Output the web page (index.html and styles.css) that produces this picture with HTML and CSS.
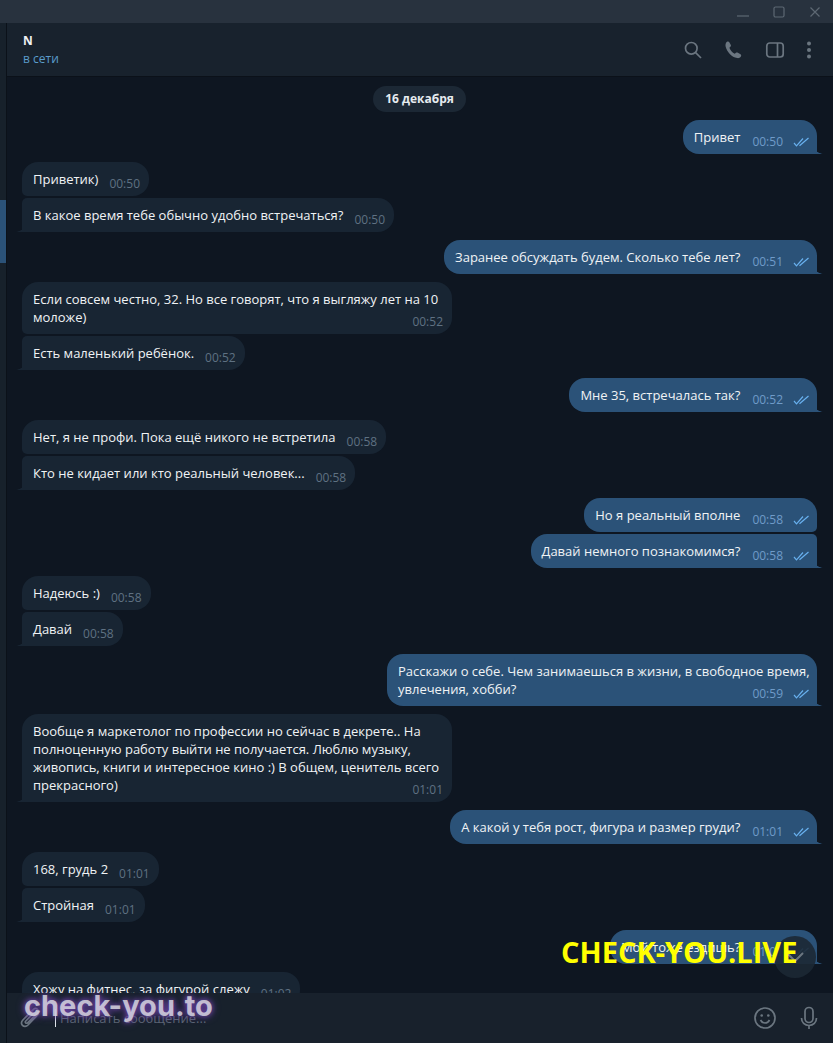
FILE: index.html
```html
<!DOCTYPE html>
<html lang="ru">
<head>
    <meta charset="UTF-8">
    <title>N</title>
    <link rel="stylesheet" href="styles.css">
</head>
<body>
    <div class="window">
        <div class="titlebar">
            <svg class="win-btn" width="14" height="14" viewBox="0 0 14 14"><path d="M1 11h12"/></svg>
            <svg class="win-btn" width="14" height="14" viewBox="0 0 14 14"><rect x="2" y="2" width="10" height="10" rx="1.5"/></svg>
            <svg class="win-btn" width="14" height="14" viewBox="0 0 14 14"><path d="M2.5 2.5l9 9M11.5 2.5l-9 9"/></svg>
        </div>
        <div class="main">
            <div class="side">
                <div class="side-mark"></div>
            </div>
            <div class="chat">
                <div class="header">
                    <div class="peer">
                        <div class="peer-name">N</div>
                        <div class="peer-status">в сети</div>
                    </div>
                    <div class="header-icons">
                        <svg class="icon" width="20" height="20" viewBox="0 0 20 20"><circle cx="8.3" cy="8.3" r="5.8"/><path d="M12.6 12.6l5.4 5.4"/></svg>
                        <svg class="icon icon-fill" width="20" height="20" viewBox="0 0 20 20"><path d="M3 1.8c.9-.5 1.8-.4 2.3.4l1.4 2.6c.4.8.3 1.5-.3 2l-1 .9c.8 2.4 2.9 4.8 5.4 6l1.1-.9c.6-.5 1.3-.5 2-.1l2.6 1.6c.8.5.9 1.4.4 2.2-.9 1.3-2.3 2-3.8 1.6C7.600 16.900 3 12 1.600 6.400 1.200 4.700 1.800 2.700 3 1.800z"/></svg>
                        <svg class="icon" width="20" height="20" viewBox="0 0 20 20"><rect x="1.800" y="3" width="16.400" height="14" rx="3"/><path d="M12.500 3v14"/></svg>
                        <svg class="icon icon-fill" width="6" height="20" viewBox="0 0 6 20"><circle cx="3" cy="3.500" r="2"/><circle cx="3" cy="10" r="2"/><circle cx="3" cy="16.500" r="2"/></svg>
                    </div>
                </div>

                <div class="messages">
                    <div class="date">16 декабря</div>

                    <div class="group out">
                        <div class="bubble last">Привет<span class="meta">00:50<svg class="ticks" width="17" height="10" viewBox="0 0 17 10"><path d="M1 6l2.500 2.800L10 1.500M6.500 8.800L15.500 1"/></svg></span></div>
                    </div>

                    <div class="group in">
                        <div class="bubble first">Приветик)<span class="meta">00:50</span></div>
                        <div class="bubble last">В какое время тебе обычно удобно встречаться?<span class="meta">00:50</span></div>
                    </div>

                    <div class="group out">
                        <div class="bubble last">Заранее обсуждать будем. Сколько тебе лет?<span class="meta">00:51<svg class="ticks" width="17" height="10" viewBox="0 0 17 10"><path d="M1 6l2.500 2.800L10 1.500M6.500 8.800L15.500 1"/></svg></span></div>
                    </div>

                    <div class="group in">
                        <div class="bubble first">Если совсем честно, 32. Но все говорят, что я выгляжу лет на 10 моложе)<span class="meta">00:52</span></div>
                        <div class="bubble last">Есть маленький ребёнок.<span class="meta">00:52</span></div>
                    </div>

                    <div class="group out">
                        <div class="bubble last">Мне 35, встречалась так?<span class="meta">00:52<svg class="ticks" width="17" height="10" viewBox="0 0 17 10"><path d="M1 6l2.500 2.800L10 1.500M6.500 8.800L15.500 1"/></svg></span></div>
                    </div>

                    <div class="group in">
                        <div class="bubble first">Нет, я не профи. Пока ещё никого не встретила<span class="meta">00:58</span></div>
                        <div class="bubble last">Кто не кидает или кто реальный человек...<span class="meta">00:58</span></div>
                    </div>

                    <div class="group out">
                        <div class="bubble first">Но я реальный вполне<span class="meta">00:58<svg class="ticks" width="17" height="10" viewBox="0 0 17 10"><path d="M1 6l2.500 2.800L10 1.500M6.500 8.800L15.500 1"/></svg></span></div>
                        <div class="bubble last">Давай немного познакомимся?<span class="meta">00:58<svg class="ticks" width="17" height="10" viewBox="0 0 17 10"><path d="M1 6l2.500 2.800L10 1.500M6.500 8.800L15.500 1"/></svg></span></div>
                    </div>

                    <div class="group in">
                        <div class="bubble first">Надеюсь :)<span class="meta">00:58</span></div>
                        <div class="bubble last">Давай<span class="meta">00:58</span></div>
                    </div>

                    <div class="group out">
                        <div class="bubble last">Расскажи о себе. Чем занимаешься в жизни, в свободное время, увлечения, хобби?<span class="meta">00:59<svg class="ticks" width="17" height="10" viewBox="0 0 17 10"><path d="M1 6l2.500 2.800L10 1.500M6.500 8.800L15.500 1"/></svg></span></div>
                    </div>

                    <div class="group in">
                        <div class="bubble last">Вообще я маркетолог по профессии но сейчас в декрете.. На полноценную работу выйти не получается. Люблю музыку, живопись, книги и интересное кино :) В общем, ценитель всего прекрасного)<span class="meta">01:01</span></div>
                    </div>

                    <div class="group out">
                        <div class="bubble last">А какой у тебя рост, фигура и размер груди?<span class="meta">01:01<svg class="ticks" width="17" height="10" viewBox="0 0 17 10"><path d="M1 6l2.500 2.800L10 1.500M6.500 8.800L15.500 1"/></svg></span></div>
                    </div>

                    <div class="group in">
                        <div class="bubble first">168, грудь 2<span class="meta">01:01</span></div>
                        <div class="bubble last">Стройная<span class="meta">01:01</span></div>
                    </div>

                    <div class="group out">
                        <div class="bubble last">Мой тоже ездишь?<span class="meta">01:01<svg class="ticks" width="17" height="10" viewBox="0 0 17 10"><path d="M1 6l2.500 2.800L10 1.500M6.500 8.800L15.500 1"/></svg></span></div>
                    </div>

                    <div class="group in">
                        <div class="bubble last">Хожу на фитнес, за фигурой слежу<span class="meta">01:02</span></div>
                    </div>
                </div>

                <div class="composer">
                    <svg class="icon attach" width="24" height="24" viewBox="0 0 24 24"><path d="M20 7.500L9 19c-1.700 1.700-4.200 1.700-5.500.3-1.300-1.400-1.200-3.600.4-5.300L14.500 3.300c1.100-1.100 2.800-1.100 3.900 0 1.100 1.100 1 2.700-.1 3.900L8.600 16.800c-.6.600-1.400.6-1.900.1s-.5-1.300.1-1.900l8.400-8.500"/></svg>
                    <div class="input"><span class="caret"></span>Написать сообщение...</div>
                    <svg class="icon" width="24" height="24" viewBox="0 0 24 24"><circle cx="12" cy="12" r="10"/><path d="M7.500 14c1 2 2.600 3 4.500 3s3.500-1 4.500-3"/><circle class="eye" cx="8.700" cy="9.500" r="1.300"/><circle class="eye" cx="15.300" cy="9.500" r="1.300"/></svg>
                    <svg class="icon" width="24" height="24" viewBox="0 0 24 24"><rect x="8" y="1.500" width="8" height="15" rx="4"/><path d="M4.500 12c0 4.500 3.200 7.500 7.500 7.500s7.500-3 7.500-7.500M12 19.500V23"/></svg>
                </div>
            </div>
        </div>

        <div class="to-bottom">
            <svg width="20" height="12" viewBox="0 0 20 12"><path d="M2 2l8 8 8-8"/></svg>
        </div>
        <div class="mark-live">CHECK-YOU.LIVE</div>
        <div class="mark-to">check-you.to</div>
    </div>
</body>
</html>
```

FILE: styles.css
```css
* {
    box-sizing: border-box;
}

html, body {
    margin: 0;
    height: 100%;
}

body {
    background: #0e1621;
    font-family: "Open Sans", sans-serif;
    font-size: 13px;
    line-height: 18px;
    color: #f0f3f5;
    overflow: hidden;
}

.window {
    position: relative;
    display: flex;
    flex-direction: column;
    height: 100vh;
}

.titlebar {
    display: flex;
    justify-content: flex-end;
    align-items: center;
    gap: 22px;
    height: 23px;
    padding-right: 11px;
    background: #28323e;
}

.win-btn {
    fill: none;
    stroke: #5d6873;
    stroke-width: 1.2;
}

.main {
    flex: 1;
    display: flex;
    min-height: 0;
}

.side {
    width: 7px;
    padding-top: 177px;
    background: #17212b;
    border-right: 1px solid #0b1119;
}

.side-mark {
    height: 63px;
    background: #2b5278;
}

.chat {
    flex: 1;
    display: flex;
    flex-direction: column;
    min-width: 0;
}

.header {
    display: flex;
    justify-content: space-between;
    align-items: center;
    height: 54px;
    padding: 0 21px 0 16px;
    background: #18222d;
    border-bottom: 1px solid #0b1119;
}

.peer-name {
    font-weight: 700;
    font-size: 12px;
    color: #eef1f3;
}

.peer-status {
    font-size: 12px;
    color: #5a9ccb;
}

.header-icons {
    display: flex;
    align-items: center;
    gap: 21px;
}

.icon {
    flex: none;
    fill: none;
    stroke: #6b7680;
    stroke-width: 1.7;
}

.icon-fill {
    fill: #6b7680;
    stroke: none;
}

.icon .eye {
    fill: #6b7680;
    stroke: none;
}

.messages {
    flex: 1;
    display: flex;
    flex-direction: column;
    gap: 8px;
    min-height: 0;
    padding: 9px 16px 0 15px;
    overflow: hidden;
}

.date {
    align-self: center;
    height: 26px;
    padding: 4px 12px;
    border-radius: 13px;
    background: #1c2835;
    font-size: 12px;
    font-weight: 700;
    color: #e6ebef;
}

.group {
    display: flex;
    flex-direction: column;
    flex: none;
    gap: 2px;
}

.group.in {
    align-items: flex-start;
}

.group.out {
    align-items: flex-end;
}

.bubble {
    position: relative;
    display: flow-root;
    max-width: 430px;
    padding: 8px 9px 8px 11px;
    border-radius: 16px;
    background: #182533;
}

.out .bubble {
    padding-right: 7px;
    background: #2b5278;
}

.in .bubble.first {
    border-bottom-left-radius: 5px;
}

.in .bubble.last {
    border-top-left-radius: 5px;
    border-bottom-left-radius: 0;
}

.in .bubble.last:first-child {
    border-top-left-radius: 16px;
}

.out .bubble.first {
    border-bottom-right-radius: 5px;
}

.out .bubble.last {
    border-top-right-radius: 5px;
    border-bottom-right-radius: 0;
}

.out .bubble.last:first-child {
    border-top-right-radius: 16px;
}

.bubble.last::after {
    content: "";
    position: absolute;
    bottom: 0;
    width: 6px;
    height: 9px;
}

.in .bubble.last::after {
    left: -6px;
    background: radial-gradient(circle at 0 0, transparent 8.500px, #182533 9px);
}

.out .bubble.last::after {
    right: -6px;
    background: radial-gradient(circle at 100% 0, transparent 8.500px, #2b5278 9px);
}

.meta {
    float: right;
    display: flex;
    align-items: center;
    margin: 5px 0 -5px 11px;
    font-size: 12px;
    color: #5f7182;
}

.out .meta {
    margin-left: 12px;
    color: #6f9bc8;
}

.ticks {
    margin-left: 10px;
    fill: none;
    stroke: #68b0ee;
    stroke-width: 1.200;
}

.composer {
    display: flex;
    align-items: center;
    flex: none;
    gap: 20px;
    height: 50px;
    padding: 0 12px;
    background: #18212c;
}

.input {
    flex: 1;
    margin-left: -8px;
    font-size: 13px;
    color: #5b6673;
}

.caret {
    display: inline-block;
    width: 1px;
    height: 18px;
    margin-right: 4px;
    background: #dfe5ea;
    vertical-align: top;
}

.to-bottom {
    position: absolute;
    left: 774px;
    top: 936px;
    display: flex;
    align-items: center;
    justify-content: center;
    width: 42px;
    height: 42px;
    border-radius: 50%;
    background: rgba(28, 40, 52, 0.9);
}

.to-bottom svg {
    fill: none;
    stroke: #6b7680;
    stroke-width: 2;
}

.mark-live {
    position: absolute;
    left: 561px;
    top: 931px;
    font-size: 29px;
    line-height: 42px;
    font-weight: 700;
    color: #ffff00;
    white-space: nowrap;
}

.mark-to {
    position: absolute;
    left: 24px;
    top: 985px;
    font-family: Inter, sans-serif;
    font-size: 29px;
    line-height: 42px;
    font-weight: 700;
    color: rgba(226, 226, 232, 0.8);
    text-shadow: 0 0 9px #6d43a8, 0 0 5px #6d43a8;
    white-space: nowrap;
}
```
